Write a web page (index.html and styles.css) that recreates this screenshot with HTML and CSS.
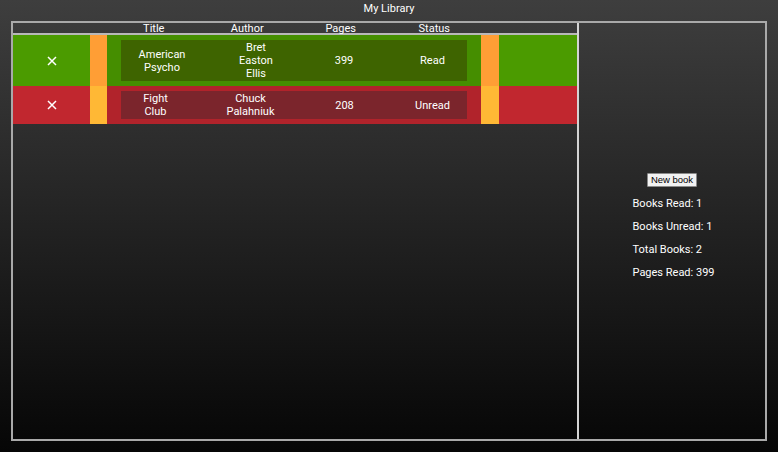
FILE: index.html
```html
<!DOCTYPE html>
<html lang="en">
<head>
<meta charset="utf-8">
<title>My Library</title>
<link rel="stylesheet" href="styles.css">
</head>
<body>
  <div class="title">My Library</div>
  <main class="library">
    <section class="books">
      <div class="head">
        <div class="head-cells">
          <span>Title</span>
          <span>Author</span>
          <span>Pages</span>
          <span>Status</span>
        </div>
      </div>
      <div class="book read">
        <div class="del">
          <svg width="10" height="10" viewBox="0 0 10 10"><path d="M1 1L9 9M9 1L1 9" stroke="#fff" stroke-width="1.5" fill="none"/></svg>
        </div>
        <div class="stripe"></div>
        <div class="info">
          <div class="cells cells-a">
            <span>American<br>Psycho</span>
            <span>Bret<br>Easton<br>Ellis</span>
            <span>399</span>
            <span>Read</span>
          </div>
        </div>
        <div class="stripe"></div>
        <div class="rest"></div>
      </div>
      <div class="book unread">
        <div class="del">
          <svg width="10" height="10" viewBox="0 0 10 10"><path d="M1 1L9 9M9 1L1 9" stroke="#fff" stroke-width="1.5" fill="none"/></svg>
        </div>
        <div class="stripe"></div>
        <div class="info">
          <div class="cells cells-b">
            <span>Fight<br>Club</span>
            <span>Chuck<br>Palahniuk</span>
            <span>208</span>
            <span>Unread</span>
          </div>
        </div>
        <div class="stripe"></div>
        <div class="rest"></div>
      </div>
    </section>
    <aside class="side">
      <button class="new-book">New book</button>
      <div class="stats">
        <p>Books Read: 1</p>
        <p>Books Unread: 1</p>
        <p>Total Books: 2</p>
        <p>Pages Read: 399</p>
      </div>
    </aside>
  </main>
</body>
</html>
```

FILE: styles.css
```css
* { box-sizing: border-box; }

html, body { height: 100%; }

body {
  margin: 0;
  padding: 0 11px 11px;
  background: linear-gradient(to bottom, #3e3e3e, #060606);
  color: #fff;
  font-family: Roboto, "Liberation Sans", sans-serif;
  font-size: 11px;
  display: flex;
  flex-direction: column;
}

.title {
  height: 21px;
  line-height: 17px;
  text-align: center;
}

.library {
  flex: 1;
  display: flex;
  border: 2px solid #a9a9a9;
}

.books {
  width: 566px;
  border-right: 2px solid #d4d4d4;
  display: flex;
  flex-direction: column;
}

.head {
  height: 12px;
  border-bottom: 2px solid #b8b8b8;
  padding-left: 94px;
}

.head-cells {
  width: 374px;
  display: grid;
  grid-template-columns: repeat(4, 1fr);
  line-height: 11px;
  text-align: center;
}

.book {
  display: flex;
}

.del {
  width: 77px;
  display: flex;
  align-items: center;
  justify-content: center;
}

.del svg { display: block; }

.stripe { width: 17px; }
.info + .stripe { width: 18px; }

.info {
  width: 374px;
  padding: 5px 14px;
  background: rgba(0, 0, 0, 0.08);
}

.rest { flex: 1; }

.cells {
  display: grid;
  height: 100%;
  align-items: center;
  padding: 1px 0;
  line-height: 13px;
  text-align: center;
}

.cells-a { grid-template-columns: 82px 106px 70px 107px; }
.cells-b { grid-template-columns: 69px 121px 67px 109px; }

.read { background: #4b9b00; }
.read .stripe { background: #ff9e35; }
.read .cells { background: #3e6400; }

.unread { background: #c1272f; }
.unread .stripe { background: #ffb835; }
.unread .cells { background: #7b252c; }

.side {
  flex: 1;
  display: flex;
  flex-direction: column;
  align-items: center;
  justify-content: center;
}

.new-book {
  height: 14px;
  padding: 0 3px;
  font-family: "Liberation Sans", Arial, sans-serif;
  font-size: 9.5px;
  line-height: 12px;
  color: #000;
  background: #f2f2f2;
  border: 1px solid #8a8a8a;
  border-radius: 1px;
}

.stats { width: 79px; }

.stats p {
  margin: 10px 0;
  line-height: 13px;
  white-space: nowrap;
}
```
